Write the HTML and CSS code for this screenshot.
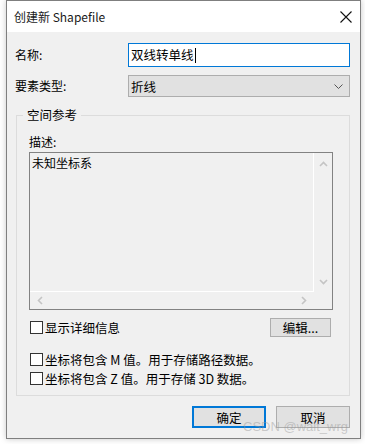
FILE: index.html
```html
<!DOCTYPE html>
<html lang="zh-CN">
<head>
<meta charset="utf-8">
<title>创建新 Shapefile</title>
<link rel="stylesheet" href="styles.css">
</head>
<body>
<div class="dialog">
  <div class="titlebar">
    <span class="title">创建新 Shapefile</span>
    <svg class="close" width="12" height="12" viewBox="0 0 12 12"><path d="M0.5 0.5 L11.5 11.5 M11.5 0.5 L0.5 11.5" stroke="#111" stroke-width="1.1" fill="none"/></svg>
  </div>
  <div class="content">
    <div class="row row-name">
      <span class="label">名称:</span>
      <div class="input">双线转单线<span class="caret"></span></div>
    </div>
    <div class="row row-type">
      <span class="label">要素类型:</span>
      <div class="select">
        <span>折线</span>
        <svg width="9" height="5" viewBox="0 0 9 5"><path d="M0.5 0.5 L4.5 4.5 L8.5 0.5" stroke="#555" stroke-width="1" fill="none"/></svg>
      </div>
    </div>
    <div class="group">
      <span class="legend">空间参考</span>
      <div class="desc-label">描述:</div>
      <div class="desc-box">
        <div class="desc-text">未知坐标系</div>
        <div class="vscroll">
          <svg width="9" height="6" viewBox="0 0 9 6"><path d="M1 5 L4.5 1.5 L8 5" stroke="#c4c4c4" stroke-width="1.6" fill="none"/></svg>
          <svg width="9" height="6" viewBox="0 0 9 6"><path d="M1 1 L4.5 4.5 L8 1" stroke="#c4c4c4" stroke-width="1.6" fill="none"/></svg>
        </div>
        <div class="hscroll">
          <svg width="6" height="9" viewBox="0 0 6 9"><path d="M5 1 L1.5 4.5 L5 8" stroke="#c4c4c4" stroke-width="1.6" fill="none"/></svg>
          <svg width="6" height="9" viewBox="0 0 6 9"><path d="M1 1 L4.5 4.5 L1 8" stroke="#c4c4c4" stroke-width="1.6" fill="none"/></svg>
        </div>
        <div class="corner"></div>
      </div>
      <div class="detail-row">
        <label class="check"><span class="box"></span>显示详细信息</label>
        <div class="btn btn-edit">编辑...</div>
      </div>
      <label class="check check-m"><span class="box"></span>坐标将包含 M 值。用于存储路径数据。</label>
      <label class="check check-z"><span class="box"></span>坐标将包含 Z 值。用于存储 3D 数据。</label>
    </div>
    <div class="buttons">
      <div class="btn btn-ok">确定</div>
      <div class="btn btn-cancel">取消</div>
    </div>
  </div>
  <span class="watermark">CSDN @wait_wrg</span>
</div>
</body>
</html>
```
FILE: styles.css
```css
* { box-sizing: border-box; }
html, body { margin: 0; padding: 0; background: #ffffff; }
body {
  font-family: "Noto Sans CJK SC", "Noto Sans", "Liberation Sans", sans-serif;
  font-size: 12px;
  color: #000;
  width: 365px;
  height: 444px;
  overflow: hidden;
}
.dialog {
  position: relative;
  margin-left: 6px;
  width: 355px;
  height: 439px;
  border: 1px solid #7f7f7f;
  background: #f0f0f0;
  box-shadow: 0 0 6px rgba(0,0,0,0.22);
  display: flex;
  flex-direction: column;
}
.titlebar {
  height: 31px;
  background: #ffffff;
  display: flex;
  align-items: center;
  justify-content: space-between;
  padding: 0 8px 0 7px;
}
.title { font-size: 12px; color: #1a1a1a; line-height: 16px; margin-top: 1px; }
.close { margin-top: 1px; }
.content {
  flex: 1;
  padding: 11px 9px 0 8px;
  display: flex;
  flex-direction: column;
}
.row { display: flex; align-items: center; }
.label { width: 113px; line-height: 16px; }
.input {
  width: 222px;
  height: 24px;
  border: 1px solid #0078d7;
  background: #fff;
  padding-left: 2px;
  font-size: 12.5px;
  line-height: 22px;
  display: flex;
  align-items: center;
}
.caret { width: 1px; height: 15px; background: #000; margin-left: 1px; }
.row-type { margin-top: 8px; }
.select {
  width: 222px;
  height: 22px;
  border: 1px solid #adadad;
  background: #e1e1e1;
  padding: 0 6px 0 2px;
  font-size: 12.5px;
  display: flex;
  align-items: center;
  justify-content: space-between;
}
.group {
  position: relative;
  margin: 18px 1px 0 1px;
  width: 334px;
  border: 1px solid #dcdcdc;
  padding: 18px 16px 7px 12px;
}
.legend {
  position: absolute;
  left: 6px;
  top: -9px;
  padding: 0 4px;
  background: #f0f0f0;
  line-height: 16px;
  font-size: 12.5px;
}
.desc-label { line-height: 16px; }
.desc-box {
  margin-top: 2px;
  width: 304px;
  height: 158px;
  border: 1px solid #828282;
  background: #f0f0f0;
  display: grid;
  grid-template-columns: 284px 18px;
  grid-template-rows: 139px 17px;
}
.desc-text {
  border-right: 1px solid #ffffff;
  border-bottom: 1px solid #ffffff;
  padding: 2px 2px;
  line-height: 16px;
}
.vscroll {
  display: flex;
  flex-direction: column;
  justify-content: space-between;
  align-items: center;
  padding: 8px 0 7px 0;
}
.hscroll {
  display: flex;
  justify-content: space-between;
  align-items: center;
  padding: 0 7px 0 7px;
}
.detail-row {
  margin-top: 8px;
  height: 19px;
  display: flex;
  align-items: center;
  justify-content: space-between;
  padding-right: 2px;
}
.check {
  display: flex;
  align-items: center;
  line-height: 16px;
  margin-left: 1px;
  font-size: 12.5px;
}
.box {
  width: 13px;
  height: 13px;
  border: 1px solid #333;
  background: #fff;
  margin-right: 2px;
}
.check-m { margin-top: 13px; height: 19px; }
.check-z { height: 19px; }
.btn {
  display: flex;
  align-items: center;
  justify-content: center;
  background: #e1e1e1;
  border: 1px solid #adadad;
  font-size: 12.5px;
}
.btn-edit { width: 61px; height: 19px; }
.buttons {
  margin-top: 10px;
  display: flex;
  justify-content: flex-end;
  gap: 10px;
  padding-right: 1px;
}
.btn-ok, .btn-cancel { width: 74px; height: 22px; }
.btn-ok { border: 2px solid #0078d7; }
.watermark {
  position: absolute;
  right: 12px;
  bottom: 4px;
  font-family: "Liberation Sans", sans-serif;
  font-size: 13px;
  color: rgba(150,150,150,0.45);
}
```
